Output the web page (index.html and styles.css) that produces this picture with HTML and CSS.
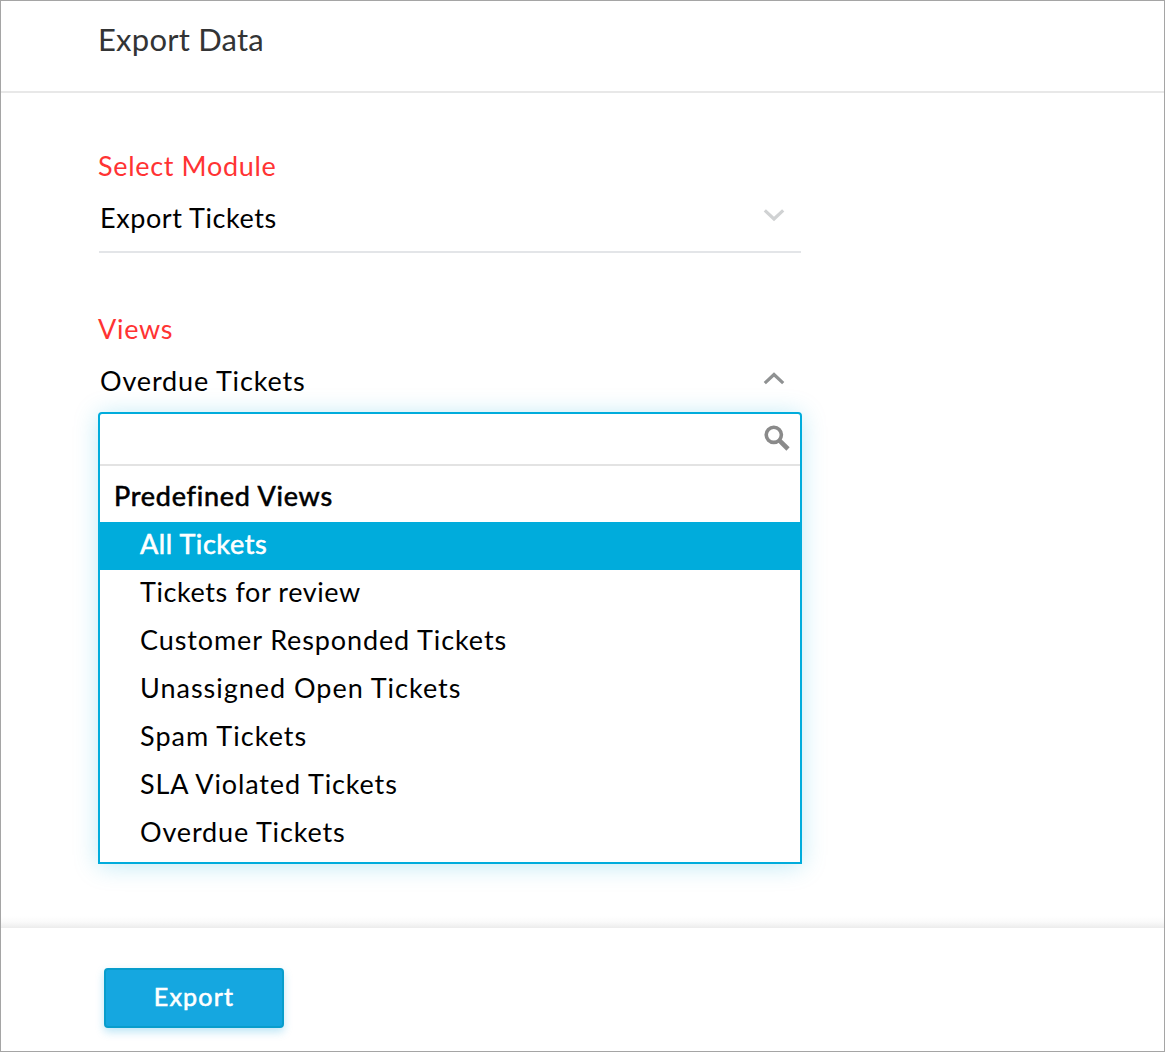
FILE: index.html
```html
<!DOCTYPE html>
<html lang="en">
<head>
<meta charset="utf-8">
<title>Export Data</title>
<link rel="stylesheet" href="styles.css">
</head>
<body>
<div class="page">
  <header class="header"><h1 class="title">Export Data</h1></header>
  <main class="form">
    <section class="field">
      <div class="label"><span class="t-module">Select Module</span></div>
      <div class="select">
        <span class="t-export-tickets">Export Tickets</span>
        <svg class="chevron" width="22" height="14" viewBox="0 0 22 14"><path d="M1.8 2.3 11 11 20.2 2.3" fill="none" stroke="#d0d2d3" stroke-width="3.2"/></svg>
      </div>
    </section>
    <section class="field field-open">
      <div class="label"><span class="t-views">Views</span></div>
      <div class="select">
        <span class="t-overdue">Overdue Tickets</span>
        <svg class="chevron" width="22" height="14" viewBox="0 0 22 14"><path d="M1.8 12.2 11 3.5 20.2 12.2" fill="none" stroke="#8f9192" stroke-width="3.2"/></svg>
      </div>
      <div class="dropdown">
        <div class="search">
          <svg width="26" height="26" viewBox="0 0 26 26"><circle cx="9.8" cy="9.8" r="7.6" fill="none" stroke="#8a8a8a" stroke-width="3.6"/><path d="M15.3 15.3 24 24" stroke="#8a8a8a" stroke-width="4.6"/></svg>
        </div>
        <div class="group"><span class="t-group">Predefined Views</span></div>
        <ul class="options">
          <li class="option active"><span class="t-all">All Tickets</span></li>
          <li class="option"><span class="t-review">Tickets for review</span></li>
          <li class="option"><span class="t-customer">Customer Responded Tickets</span></li>
          <li class="option"><span class="t-unassigned">Unassigned Open Tickets</span></li>
          <li class="option"><span class="t-spam">Spam Tickets</span></li>
          <li class="option"><span class="t-sla">SLA Violated Tickets</span></li>
          <li class="option"><span class="t-overdue">Overdue Tickets</span></li>
        </ul>
      </div>
    </section>
  </main>
  <footer class="footer"><button class="export">Export</button></footer>
</div>
</body>
</html>
```
FILE: styles.css
```css
* { box-sizing: border-box; }
body { margin: 0; background: #fff; color: #000; font: 27px/48px Lato, "Open Sans", sans-serif; }
.page { width: 1165px; height: 1052px; border: 1px solid #a5a5a5; display: flex; flex-direction: column; overflow: hidden; }
.header { height: 92px; flex: none; border-bottom: 2px solid #e8e8e8; padding: 14px 0 0 97px; }
.title { margin: 0; font-size: 31px; font-weight: 400; line-height: 48px; color: #333435; letter-spacing: .22px; }
.form { flex: 1; padding: 48px 0 0 97px; background: linear-gradient(to top, #ececec 0, #fafafa 6px, #fff 12px); }
.field { width: 704px; height: 163px; }
.label { height: 48px; line-height: 50px; color: #ff3333; }
.select { height: 64px; padding: 5px 16px 0 1px; margin: 0 1px; display: flex; justify-content: space-between; border-bottom: 2px solid #e3e5e8; }
.chevron { margin-top: 14px; }
.field-open .select { border-bottom: 0; height: 60px; }
.dropdown { height: 452px; border: 2px solid #00acdc; border-radius: 4px 4px 0 0; background: #fff; box-shadow: 0 2px 24px rgba(0,172,220,.25); }
.search { height: 52px; border-bottom: 2px solid #e3e3e3; display: flex; justify-content: flex-end; padding: 11px 10px 0 0; }
.group { height: 56px; padding: 6px 0 0 14px; -webkit-text-stroke: .6px currentColor; }
.options { list-style: none; margin: 0; padding: 0; }
.option { height: 48px; line-height: 44px; padding-left: 40px; }
.active { background: #00acdc; color: #fff; -webkit-text-stroke: .6px currentColor; }
.t-module { letter-spacing: .67px; }
.t-export-tickets { letter-spacing: .57px; }
.t-views { letter-spacing: .7px; }
.t-overdue { letter-spacing: .84px; }
.t-group { letter-spacing: .76px; }
.t-all { letter-spacing: .58px; }
.t-review { letter-spacing: .6px; }
.t-customer { letter-spacing: .89px; }
.t-unassigned { letter-spacing: .98px; }
.t-spam { letter-spacing: 1.03px; }
.t-sla { letter-spacing: .87px; }
.footer { height: 123px; flex: none; padding: 40px 0 0 103px; }
.export { display: block; width: 180px; height: 60px; padding: 0 0 4px; border: 2px solid #089dcc; border-radius: 4px; background: #15a7e0; color: #fff; font: 25px/52px Lato, sans-serif; letter-spacing: 1.2px; -webkit-text-stroke: .6px currentColor; box-shadow: 0 4px 8px rgba(21,167,224,.28); }
```
